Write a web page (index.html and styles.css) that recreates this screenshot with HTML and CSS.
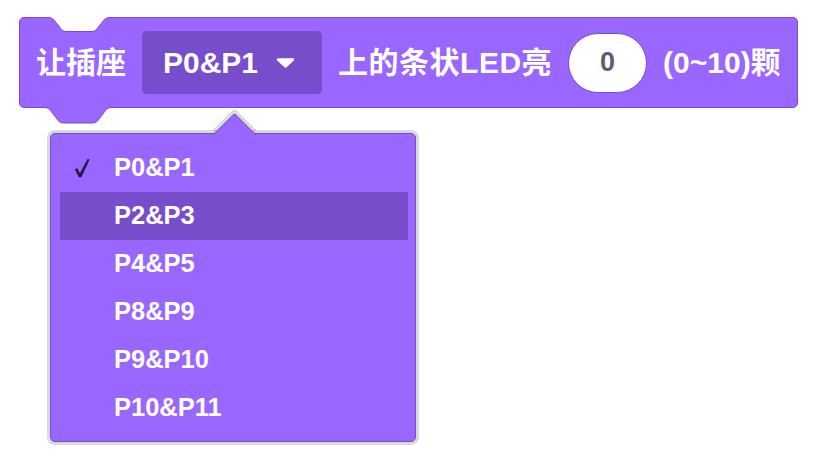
FILE: index.html
```html
<!DOCTYPE html>
<html>
<head>
<meta charset="utf-8">
<link rel="stylesheet" href="styles.css">
</head>
<body>
<div class="stage">
  <div class="block">
    <svg class="notch" width="62" height="16" viewBox="0 0 62 16">
      <path d="M0,0 H62 V0.5 C59,0.5 57.5,1.5 56,3 L50,10.5 C48.5,12.5 47,14.5 44,14.5 H18 C15,14.5 13.5,12.5 12,10.5 L6,3 C4.5,1.5 3,0.5 0,0.5 Z" fill="#ffffff"/>
      <path d="M0,0.5 C3,0.5 4.5,1.5 6,3 L12,10.5 C13.5,12.5 15,14.5 18,14.5 H44 C47,14.5 48.5,12.5 50,10.5 L56,3 C57.5,1.5 59,0.5 62,0.5" fill="none" stroke="#774DCB" stroke-width="1"/>
    </svg>
    <span class="label">让插座</span>
    <div class="field">
      <span class="field-text">P0&amp;P1</span>
      <svg class="caret" width="19" height="10" viewBox="0 0 19 10">
        <path d="M2,1.5 L17,1.5 L9.5,8.5 Z" fill="#ffffff" stroke="#ffffff" stroke-width="2.4" stroke-linejoin="round"/>
      </svg>
    </div>
    <span class="label label-wide">上的条状LED亮</span>
    <div class="num">0</div>
    <span class="label">(0~10)颗</span>
    <svg class="tab" width="68" height="18" viewBox="0 0 68 18">
      <path d="M0,0 H68 V0.5 C64.5,0.5 63,1.5 61.5,3.5 L55,12 C53.5,14.5 51.5,16 48.5,16 H19.5 C16.5,16 14.5,14.5 13,12 L6.5,3.5 C5,1.5 3.5,0.5 0,0.5 Z" fill="#9966FF"/>
      <path d="M0,0.5 C3.5,0.5 5,1.5 6.5,3.5 L13,12 C14.5,14.5 16.5,16 19.5,16 H48.5 C51.5,16 53.5,14.5 55,12 L61.5,3.5 C63,1.5 64.5,0.5 68,0.5" fill="none" stroke="#774DCB" stroke-width="1"/>
    </svg>
  </div>

  <div class="menu">
    <div class="menu-arrow"></div>
    <div class="item">
      <span class="check">
        <svg width="16" height="20" viewBox="0 0 16 20">
          <path d="M0.8,11.2 L3.4,10.2 L5.9,15.2 L13.6,1 L15.6,1.6 L7.4,19.2 L4.9,19.2 Z" fill="#231a45"/>
        </svg>
      </span>
      <span>P0&amp;P1</span>
    </div>
    <div class="item active"><span class="check"></span><span>P2&amp;P3</span></div>
    <div class="item"><span class="check"></span><span>P4&amp;P5</span></div>
    <div class="item"><span class="check"></span><span>P8&amp;P9</span></div>
    <div class="item"><span class="check"></span><span>P9&amp;P10</span></div>
    <div class="item"><span class="check"></span><span>P10&amp;P11</span></div>
  </div>
</div>
</body>
</html>
```

FILE: styles.css
```css
html, body {
  margin: 0;
  padding: 0;
  background: #ffffff;
}

body {
  font-family: "Liberation Sans", "Noto Sans CJK SC", sans-serif;
  font-weight: bold;
  color: #ffffff;
}

.stage {
  position: relative;
  width: 818px;
  height: 466px;
  padding: 17px 0 0 19px;
  box-sizing: border-box;
}

.block {
  position: relative;
  display: inline-flex;
  align-items: center;
  gap: 16px;
  height: 91px;
  box-sizing: border-box;
  padding: 0 16px 0 16px;
  background: #9966FF;
  border: 1px solid #774DCB;
  border-radius: 5px;
}

.notch {
  position: absolute;
  left: 28px;
  top: -1px;
  display: block;
}

.tab {
  position: absolute;
  left: 24px;
  top: 100%;
  display: block;
}

.label {
  font-size: 30px;
  line-height: 1;
  white-space: nowrap;
}

.label-wide {
  letter-spacing: 0.5px;
}

.field {
  display: flex;
  align-items: center;
  height: 63px;
  box-sizing: border-box;
  padding: 0 27px 0 21px;
  background: #774DCB;
  border-radius: 5px;
}

.field-text {
  font-size: 30px;
  line-height: 1;
  margin-right: 18px;
}

.caret {
  display: block;
}

.num {
  width: 79px;
  height: 60px;
  box-sizing: border-box;
  border: 1px solid #774DCB;
  border-radius: 30px;
  background: #ffffff;
  color: #575E75;
  font-size: 27px;
  display: flex;
  align-items: center;
  justify-content: center;
}

.menu {
  position: absolute;
  left: 50px;
  top: 133px;
  width: 366px;
  box-sizing: border-box;
  padding: 10px 7px 9px 9px;
  background: #9966FF;
  border: 1px solid #774DCB;
  border-radius: 5px;
  box-shadow: 0 0 0 3px rgba(0, 0, 0, 0.15);
}

.menu-arrow {
  position: absolute;
  left: 168px;
  top: -15px;
  width: 31px;
  height: 31px;
  box-sizing: border-box;
  background: #9966FF;
  border-top: 1px solid #774DCB;
  border-left: 1px solid #774DCB;
  border-radius: 4px 0 0 0;
  transform: rotate(45deg);
  box-shadow: -3px -3px 0 0 rgba(0, 0, 0, 0.15);
}

.item {
  position: relative;
  display: flex;
  align-items: center;
  height: 48px;
  padding-left: 14px;
  font-size: 25.5px;
  line-height: 1;
}

.item.active {
  background: #774DCB;
}

.check {
  width: 40px;
  display: flex;
  align-items: center;
}

.check svg {
  display: block;
}
```
